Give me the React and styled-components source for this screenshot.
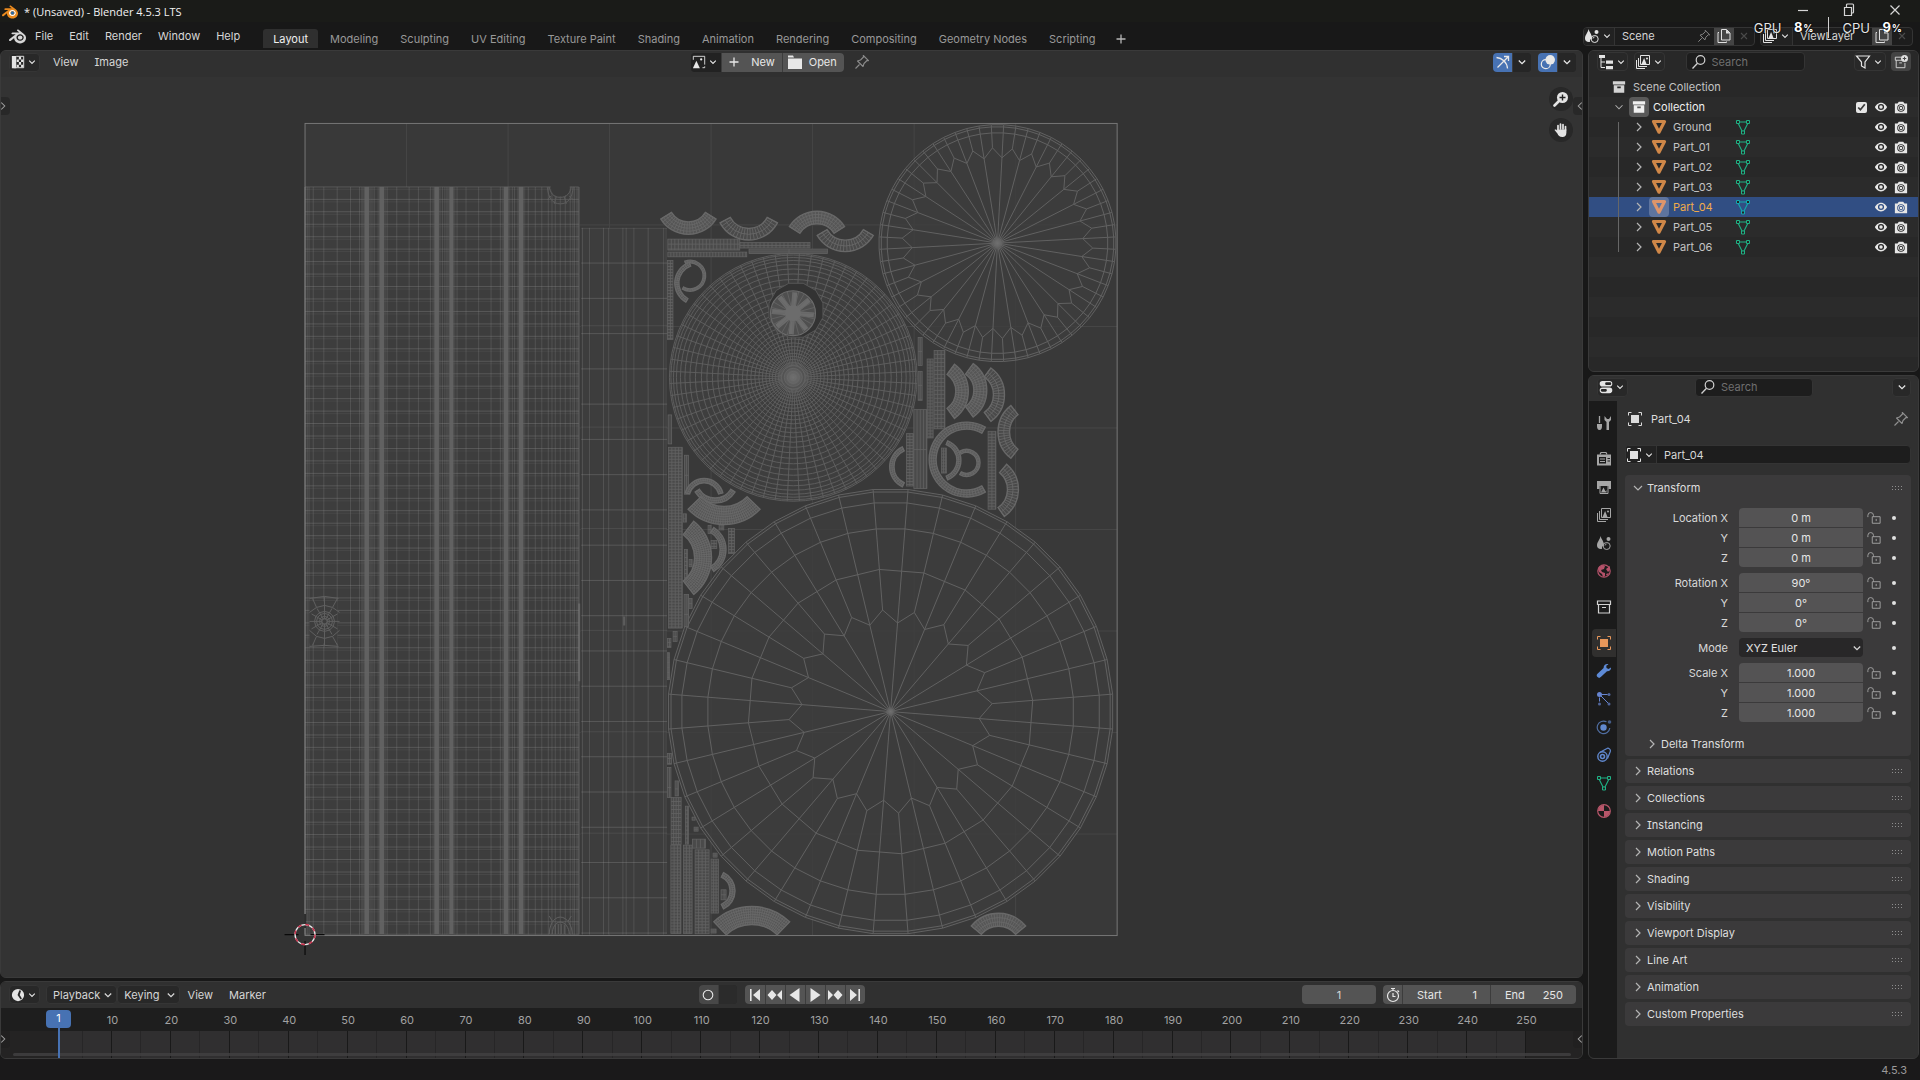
import React from 'react';
import styled, { createGlobalStyle, css } from 'styled-components';
import { SiBlender } from 'react-icons/si';

const GlobalStyle = createGlobalStyle`
  *, *::before, *::after { box-sizing: border-box; }
  body { margin: 0; background: #181818; overflow: hidden; }
  body, button, input, select {
    font-family: Inter, "Noto Sans", sans-serif;
    font-size: 11px;
    line-height: 16px;
    font-feature-settings: "cv08";
    color: #d6d6d6;
  }
  button { border: 0; padding: 0; background: none; cursor: default; }
  input { border: 0; padding: 0; margin: 0; min-width: 0; outline: none; }
  svg { display: block; flex: none; }
`;

/* ---------- icons ---------- */

const S = (d, extra) => <path d={d} fill="none" stroke="currentColor" {...extra} />;
const F = (d, extra) => <path d={d} fill="currentColor" {...extra} />;

const GLYPHS = {
  down: S('M4.800 6.500l3.200 3.200 3.200-3.200', { strokeWidth: 1.3 }),
  right: S('M6 4l4 4-4 4', { strokeWidth: 1.2 }),
  expand: S('M4 6l4 4 4-4', { strokeWidth: 1.2 }),
  left: S('M10 4L6 8l4 4', { strokeWidth: 1.2 }),
  plus: S('M8 3.500v9M3.500 8h9', { strokeWidth: 1.3 }),
  close: S('M5 5l6 6M11 5l-6 6', { strokeWidth: 1.1 }),
  pin: S('M1.500 14.500l4-4M3.500 7l5.500 5.500 1-3 3-3 1.500.2L9.300 1.500l.2 1.500-3 3z', { strokeWidth: 1.1, strokeLinejoin: 'round' }),
  copy: <>{S('M5.500 1.500h5l3.500 3.500v7H5.500zM3 4.500H2v10h8.500v-1')}{F('M10 1.500V5.500h4z')}</>,
  image: <>{S('M14.500 11V1.500h-13v4M12 14.500h2.500V13')}{F('M1 15l4-8.500L9 15z')}<circle cx="10.500" cy="5" r="1.300" fill="currentColor" /></>,
  layers: <>{S('M5.500 1.500h9v9h-9zM3.500 4v8.500H12M1.500 6v8.500H10')}{F('M6.500 10l2.600-6 2.400 6z')}<circle cx="12" cy="4.500" r="1" fill="currentColor" /></>,
  uv: <>{F('M1 1h5v14H1z')}{S('M6 1.500h8.500v13H3', { strokeWidth: 1.1 })}{F('M9 2h2.500v3H9zM6.500 5H9v3H6.500zM11.500 5H14v3h-2.500zM9 8h2.500v3H9zM6.500 11H9v3H6.500zM11.500 11H14v3h-2.500z')}</>,
  folder: F('M1 1.500h5l1 2H1zM1 4.500h14V15H1z'),
  scene: <>{F('M4.500 1C5.500 4.500 8 6.500 8 10.500 5.500 11 6 14 6 14 3 14.500 1 13 1 10.500 1 7 3.800 5 4.500 1z')}<circle cx="10.700" cy="11" r="3.500" fill="none" stroke="currentColor" /><circle cx="12.500" cy="4" r="2" fill="currentColor" />{S('M9 10.500a2 2 0 0 1 1.500-1.500')}</>,
  gizmo: <>{S('M1.500 3.500C7 4 12 8 12.500 14.500M2.500 13.500L13 3M9 2.500h4.500V7', { strokeWidth: 1.3 })}</>,
  overlays: <><circle cx="10.200" cy="5.800" r="4.800" fill="currentColor" /><circle cx="5.800" cy="10.200" r="4.500" fill="none" stroke="currentColor" strokeWidth="1.200" /></>,
  tree: <>{F('M1 1h6v3H1zM8 6.500h7v3.300H8zM8 12h7v3.300H8z')}{S('M3 4v9.500h4M3 8h4')}</>,
  search: <><circle cx="9.500" cy="6" r="4.300" fill="none" stroke="currentColor" strokeWidth="1.200" />{S('M6.500 9.200L1.500 14.500', { strokeWidth: 1.300 })}</>,
  filter: S('M1.500 2h13L10 8v6l-3.500-2V8z', { strokeWidth: 1.2 }),
  newCollection: <>{S('M9 2.500H1.500V6H10M2.500 6v8.500h10V9M6 9h3')}<circle cx="12" cy="4" r="4" fill="currentColor" />{S('M12 2v4M10 4h4', { stroke: '#4b4b4b', strokeWidth: 1.2 })}</>,
  collection: <>{F('M1 1.500h14V5H1z')}<path fillRule="evenodd" fill="currentColor" d="M2 6h12v8.500H2zM6 7.500v2h4v-2z" /></>,
  archive: <>{S('M1.500 2h13v3.500h-13zM2.500 5.500v8.500h11V5.500M6 8.500h4', { strokeWidth: 1.2 })}</>,
  object: <>{F('M4 4h8v8H4z')}{S('M1.500 4.500v-3h3M11.500 1.500h3v3M14.500 11.500v3h-3M4.500 14.500h-3v-3', { strokeWidth: 1 })}</>,
  triangle: <path d="M2.500 2.500h11L8 13.200z" fill="none" stroke="currentColor" strokeWidth="3.200" strokeLinejoin="round" />,
  mesh: <>{S('M2 3h12M3 4l4.500 9M13 4L8.500 13', { strokeWidth: 1.1 })}{S('M1.500 1.500h3v3h-3zM11.500 1.500h3v3h-3zM6.500 12h3v3h-3z', { fill: '#232323' })}</>,
  eye: <><path fillRule="evenodd" fill="currentColor" d="M8 3c3.500 0 6 3 7 5-1 2-3.500 5-7 5s-6-3-7-5c1-2 3.500-5 7-5zm0 1.500A3.500 3.500 0 1 0 8 11.500 3.500 3.500 0 0 0 8 4.500z" /><circle cx="8" cy="8" r="2" fill="currentColor" /></>,
  camera: <><path fillRule="evenodd" fill="currentColor" d="M1 4h3l1.500-2h5L12 4h3v11H1zm7 .8a4.300 4.300 0 1 0 0 8.600 4.300 4.300 0 0 0 0-8.600z" /><circle cx="8" cy="9.100" r="3" fill="none" stroke="currentColor" strokeWidth="1" /><circle cx="8" cy="9.100" r="1.500" fill="currentColor" /></>,
  properties: <>{F('M4 1h8a3.200 3.200 0 0 1 0 6.400H4A3.200 3.200 0 0 1 4 1zM4 8.600h8a3.200 3.200 0 0 1 0 6.400H4a3.200 3.200 0 0 1 0-6.400z')}{S('M8.500 4.200h4M3.500 11.800h4', { stroke: '#262626', strokeWidth: 3, strokeLinecap: 'round' })}</>,
  tool: <>{S('M3.500 1v7', { strokeWidth: 1.3 })}{F('M1 9h5v2c0 2-.5 4-2.500 4S1 13 1 11z')}{F('M8.500 1v4l2 2v8h2.500V7l2-2V1l-2 3h-2z')}</>,
  render: <>{S('M4 3.500l1-2h5l1 2', { strokeWidth: 1.2 })}<path fillRule="evenodd" fill="currentColor" d="M1 3.500h14v11H1zM3 6v6.500h7V6zm8.500 1v1H14V7zm0 2.500v1H14v-1z" />{S('M4 8h5M4 10.500h5')}</>,
  output: <>{F('M1 2h14v5H1z')}{F('M1 7h2.500v3H1zM12.500 7H15v3h-2.500z')}{S('M4 7v7.500h8V7')}{F('M5 13.500L7.500 8.500l2 4L10.500 11v2.500z')}</>,
  world: <><circle cx="8" cy="8" r="6.200" fill="none" stroke="currentColor" strokeWidth="1.200" />{F('M3 4l4-2 2 1-1 3-3 1 1 2 3 1v3l-2 1-1-3-3-2-1-3zM10 6l4-3v4l-2 2zM10 11l3-1-2 3z')}</>,
  wrench: F('M15 4.500l-2.500 1.500-2-1-.2-2.300L12.500 1.200C10 .3 7.500 2 7.600 5L1.500 10.800a2.200 2.200 0 0 0 3.300 3.300L11 8.200c2.500.3 4.300-1.500 4-3.700z'),
  particles: <><circle cx="3.500" cy="3.500" r="2.500" fill="currentColor" /><circle cx="13" cy="3.500" r="1.500" fill="currentColor" opacity=".7" /><circle cx="13" cy="13" r="1.500" fill="currentColor" opacity=".7" />{S('M6 3.500h5.500M5 5l7 7M3.500 6.500v4')}<circle cx="3.500" cy="13" r="1.500" fill="currentColor" opacity=".7" /></>,
  physics: <><circle cx="7.500" cy="8.500" r="3.200" fill="currentColor" />{S('M10.500 2.800A6.300 6.300 0 1 0 13.800 9', { opacity: 0.75, strokeWidth: 1.2 })}<circle cx="13.500" cy="3" r="1.800" fill="currentColor" opacity=".6" /></>,
  constraint: <>{S('M3.500 5.500L10.500 1.700a2.500 2.500 0 0 1 3.700 3L11.500 11.500', { strokeWidth: 1.2 })}<circle cx="6.500" cy="9.500" r="4.700" fill="none" stroke="currentColor" strokeWidth="1.400" /><circle cx="6.500" cy="9.500" r="2" fill="none" stroke="currentColor" strokeWidth="1.600" /></>,
  material: <><circle cx="8" cy="8" r="6.300" fill="none" stroke="currentColor" strokeWidth="1.200" />{F('M8 8V2a6 6 0 0 0-6 6zM8 8v6a6 6 0 0 0 6-6z')}</>,
  lock: <>{S('M6 6.500h9v7.500H6zM1 7V5a3.200 3.200 0 0 1 6.400 0v1.500M10.500 9v2.500', { strokeWidth: 1.1 })}</>,
  clock: <path fillRule="evenodd" fill="currentColor" d="M8 1a7 7 0 1 0 0 14A7 7 0 0 0 8 1zM9.500 2.500l2 .5-1.500 5 2.500 4-1.500 1L7.500 8z" />,
  stopwatch: <><circle cx="8" cy="9" r="5.500" fill="none" stroke="currentColor" strokeWidth="1.200" />{S('M6 1.500h4M8 1.500v2M8 6v3.500h2.500M12.500 3.500l1.500 1.500', { strokeWidth: 1.2 })}</>,
  record: <circle cx="8" cy="8" r="4.800" fill="none" stroke="currentColor" strokeWidth="1.100" />,
  first: F('M3 2h1.600v12H3zM13 2v12L6 8z'),
  prevKey: F('M5 3l4.500 5L5 13 .5 8zM15 3v10l-5-5z'),
  playBack: F('M12.500 1v14L2.500 8z'),
  play: F('M3.500 1v14l10-7z'),
  nextKey: F('M11 3l4.500 5L11 13 6.500 8zM1 3v10l5-5z'),
  last: F('M11.400 2H13v12h-1.600zM3 2v12l7-6z'),
  zoom: <><circle cx="9.500" cy="6.500" r="5.500" fill="currentColor" />{S('M6 10L1.500 14.500', { strokeWidth: 2.6, strokeLinecap: 'round' })}{S('M9.500 3.500v6M6.500 6.500h6', { stroke: '#222', strokeWidth: 1.400 })}</>,
  hand: <>{S('M5 8V3.500M7.500 7V2M10 7V2.500M12.500 8V4.500', { strokeWidth: 1.7, strokeLinecap: 'round' })}{F('M4.200 7.500h9.200v3c0 3-1.500 4.500-4 4.500-3 0-4-1.500-5-3.500L1.500 8c1-1 2-.3 2.700.8z')}</>,
  minimize: S('M3 8.500h10', { strokeWidth: 1.2 }),
  restore: S('M3.500 5.500h7v8h-7zM5.500 5V3a1 1 0 0 1 1-1h5a1 1 0 0 1 1 1v7a1 1 0 0 1-1 1h-1', { strokeWidth: 1.2 }),
  quit: S('M3.500 3.500l9 9M12.500 3.500l-9 9', { strokeWidth: 1.2 }),
};

const Icon = ({ name, size = 16 }) => (
  <svg width={size} height={size} viewBox="0 0 16 16" aria-hidden="true">{GLYPHS[name]}</svg>
);

/* ---------- shell ---------- */

const Shell = styled.div`
  height: 100vh; display: flex; flex-direction: column; position: relative;
  background: #181818;
`;
const TitleBar = styled.header`
  height: 22px; flex: none; display: flex; align-items: center;
  padding: 2px 17px 0 2px; background: #1a1b18;
`;
const Title = styled.span`
  flex: 1; padding-left: 6px; color: #f2f2f2;
  font-family: "Open Sans", "Noto Sans", sans-serif;
`;
const WindowButtons = styled.div`
  display: flex; gap: 30px; color: #eee; padding-bottom: 4px;
`;
const MenuBar = styled.nav`
  height: 28px; flex: none; display: flex; align-items: center;
  padding: 0 7px; color: #d6d6d6;
`;
const LogoButton = styled.button`padding: 0 1px 0 2px;`;
const MenuButton = styled.button`
  height: 18px; padding: 0 8px; white-space: nowrap;
`;
const Workspaces = styled.div`
  display: flex; gap: 2px; align-self: flex-end; margin: 0 0 2px 15px; flex: 1;
`;
const WorkspaceTab = styled.button`
  height: 19px; padding: 0 10px; border-radius: 3px 3px 0 0; white-space: nowrap;
  color: ${(p) => (p.$active ? '#f0f0f0' : '#989898')};
  background: ${(p) => (p.$active ? '#2f2f2f' : 'transparent')};
`;
const AddTab = styled.button`color: #b5b5b5; padding: 0 5px;`;

const field = css`
  height: 19px; display: flex; align-items: center; border-radius: 4px;
  background: #1d1d1d; border: 1px solid #343434; overflow: hidden;
`;
const DataBlock = styled.div`
  ${field}
  margin-left: ${(p) => p.$gap || 0}px; color: #d8d8d8;
`;
const Picker = styled.button`
  height: 100%; display: flex; align-items: center; justify-content: center;
  width: ${(p) => p.$w || 31}px; color: #e2e2e2; background: #222;
  border-right: 1px solid #343434;
`;
const NameInput = styled.input`
  width: 79px; height: 100%; padding-left: 7px; background: transparent;
  flex: ${(p) => (p.$grow ? 1 : 'none')};
`;
const SlotButton = styled.button`
  width: 20px; height: ${(p) => (p.$solo ? '19px' : '100%')}; display: flex; align-items: center; justify-content: center;
  border-radius: ${(p) => (p.$solo ? 4 : 0)}px;
  background: ${(p) => (p.$raised ? '#444' : 'transparent')};
  color: ${(p) => (p.$dim ? '#4a4a4a' : p.$soft ? '#8a8a8a' : '#e0e0e0')};
`;

const UsageOverlay = styled.aside`
  position: absolute; top: 17px; right: 18px; display: flex; align-items: center;
  color: #e6e6e6; font-size: 13px; text-shadow: 0 0 2px #000, 0 0 1px #000;
  pointer-events: none;
`;
const UsageValue = styled.b`
  width: 26px; text-align: right; color: #fff; margin-left: 6px; white-space: nowrap;
  small { font-size: 10px; margin-left: 1px; }
`;
const UsageLine = styled.span`width: 1px; height: 21px; margin: 0 14px; background: #d0d0d0;`;

const Workspace = styled.main`
  flex: 1; min-height: 0; display: grid; grid-template-columns: minmax(0, 1fr) 331px;
  gap: 5px; padding-right: 1px;
`;
const Column = styled.div`display: flex; flex-direction: column; gap: 3px; min-height: 0;`;
const Area = styled.section`
  display: flex; flex-direction: column; position: relative; overflow: hidden;
  border: 1px solid #3a3a3a; border-radius: 6px; background: ${(p) => p.$bg};
  flex: ${(p) => (p.$grow ? '1 1 0' : 'none')}; min-height: 0;
`;
const AreaHeader = styled.div`
  height: 26px; flex: none; padding: 0 6px ${(p) => p.$base}px 8px; background: ${(p) => p.$bg || '#303030'};
  display: grid; grid-template-columns: 1fr auto 1fr; align-items: center;
`;
const Group = styled.div`
  display: flex; align-items: center; gap: ${(p) => p.$gap || 0}px;
  justify-content: ${(p) => (p.$end ? 'flex-end' : 'flex-start')};
  margin-right: ${(p) => p.$shift || 0}px;
`;
const Chip = styled.button`
  height: 19px; display: flex; align-items: center; justify-content: center;
  width: ${(p) => p.$w || 31}px; color: #e4e4e4; background: #282828;
  border: 1px solid #353535; border-radius: 4px;
`;
const Joined = styled.div`
  display: flex; border-radius: 4px; overflow: hidden; background: #282828;
`;
const Push = styled.button`
  height: 19px; min-width: ${(p) => p.$min || 19}px; display: flex; align-items: center; justify-content: center;
  padding: 0 ${(p) => p.$end || 0}px 0 ${(p) => p.$start || 0}px; gap: ${(p) => p.$gap || 0}px; color: #e8e8e8;
  background: ${(p) => p.$bg || '#545454'};
  & + & { border-left: 1px solid #3c3c3c; }
`;

/* ---------- image editor ---------- */

const Canvas = styled.div`
  flex: 1; min-height: 0; background: #333333; position: relative;
  > svg { width: 100%; height: 100%; }
`;
const CanvasTools = styled.div`
  position: absolute; right: 9px; top: 10px; display: flex; flex-direction: column; gap: 7px;
`;
const RoundTool = styled.button`
  width: 24px; height: 24px; border-radius: 12px; background: #282828; color: #e4e4e4;
  display: flex; align-items: center; justify-content: center;
`;
const EdgeHandle = styled.button`
  position: absolute; top: ${(p) => p.$top}px; ${(p) => p.$side}: -5px;
  width: 14px; height: 18px; color: #a0a0a0; display: flex; align-items: center; justify-content: center;
  background: rgba(30, 30, 30, 0.5); border-radius: 4px;
`;

const rad = (d) => (d * Math.PI) / 180;
const pt = (cx, cy, r, a) => `${(cx + r * Math.cos(rad(a))).toFixed(1)} ${(cy + r * Math.sin(rad(a))).toFixed(1)}`;
const range = (n) => Array.from({ length: n }, (_, i) => i);
const ring = (cx, cy, r, n, off) => `M${range(n).map((i) => pt(cx, cy, r, off + (i * 360) / n)).join('L')}Z`;
const spokes = (cx, cy, r1, r2, n, off) =>
  range(n).map((i) => `M${pt(cx, cy, r1, off + (i * 360) / n)}L${pt(cx, cy, r2, off + (i * 360) / n)}`).join('');
const zigzag = (cx, cy, r1, r2, n, off) =>
  `M${range(n * 2).map((i) => pt(cx, cy, i % 2 ? r2 : r1, off + (i * 180) / n)).join('L')}Z`;

function Island({ cx, cy, r1, r2, from, to, n = 16, rings = 1 }) {
  const large = to - from > 180 ? 1 : 0;
  const outline = `M${pt(cx, cy, r2, from)}A${r2} ${r2} 0 ${large} 1 ${pt(cx, cy, r2, to)}L${pt(cx, cy, r1, to)}A${r1} ${r1} 0 ${large} 0 ${pt(cx, cy, r1, from)}Z`;
  const ribs = range(n).map((i) => {
    const a = from + ((to - from) * i) / (n - 1);
    return `M${pt(cx, cy, r1, a)}L${pt(cx, cy, r2, a)}`;
  }).join('');
  const lanes = range(rings).map((i) => {
    const r = r1 + ((r2 - r1) * (i + 1)) / (rings + 1);
    return `M${pt(cx, cy, r, from)}A${r} ${r} 0 ${large} 1 ${pt(cx, cy, r, to)}`;
  }).join('');
  return (
    <>
      <path d={outline} fill={rings > 1 || r2 - r1 < 6 ? '#565656' : '#4a4a4a'} stroke="#686868" strokeWidth="1.400" />
      <path d={ribs + lanes} fill="none" stroke="#6a6a6a" strokeWidth=".8" />
    </>
  );
}

function Strip({ x, y, w, h, stepX = 4, stepY = 4 }) {
  let d = '';
  for (let i = stepX; i < w; i += stepX) d += `M${x + i} ${y}v${h}`;
  for (let i = stepY; i < h; i += stepY) d += `M${x} ${y + i}h${w}`;
  return (
    <>
      <rect x={x} y={y} width={w} height={h} fill="#4a4a4a" stroke="#626262" strokeWidth=".8" />
      <path d={d} stroke="#636363" strokeWidth=".8" />
    </>
  );
}

const ISLANDS = [
  [688.3, 202, 20, 32.5, 32, 148, 20, 3], [748.7, 207.700, 21, 32.5, 28, 152, 20],
  [817, 244, 20, 32.5, 212, 328, 20, 3], [845.3, 219.3, 21, 32.5, 30, 150, 20],
  [690, 276, 13, 15.5, -110, 120, 24], [696.7, 283.3, 18, 22, 120, 250, 22],
  [935, 391.7, 21, 33.5, -54, 54, 20, 3], [954, 390.7, 20, 33, -54, 54, 20, 3],
  [971.7, 395, 22, 33, -54, 54, 20], [1031.700, 432.3, 22, 33.5, 128, 232, 20],
  [985.7, 490, 22, 33, -50, 55, 20], [966.7, 460, 30.5, 37.5, 60, 300, 50, 2],
  [940, 460.7, 17, 21, -68, 68, 22], [966.7, 463.3, 10.5, 13.500, -120, 120, 20],
  [911.7, 467.3, 17.5, 22, 115, 245, 22], [704, 498.3, 15, 19.5, 195, 345, 22],
  [715, 480, 18.5, 23.5, 32, 148, 22], [724, 475, 32, 50, 44, 136, 34, 6],
  [665, 558.3, 29.500, 46.5, -52, 52, 34, 6], [700, 550, 20, 26, -58, 58, 22, 2],
  [715, 891.7, 15, 20, -65, 65, 20], [751.7, 962, 36.5, 54.5, 226, 314, 34, 6],
  [998.7, 949.7, 22.5, 35.500, 220, 320, 22, 2],
];
const STRIPS = [
  [667.7, 239.3, 72, 11, 3.5, 5], [667.7, 252.3, 79, 4.7, 3, 5], [740, 242.7, 70, 5.5, 4, 3],
  [749, 249.3, 78.5, 4.2, 40, 2], [667.3, 260.7, 5.500, 79, 3, 3],
  [918.3, 337.7, 4, 28, 2, 14], [918.3, 371.7, 4, 29, 2, 14], [927.3, 359.3, 6, 79, 3, 3],
  [934.3, 350.7, 10.700, 78.5, 3.500, 4], [914, 410, 13, 79, 3.2, 40], [906.7, 434, 6.7, 52.5, 3.3, 3],
  [988.3, 431.700, 7.7, 78, 3.800, 3], [941.7, 448.5, 5, 25, 2, 3],
  [668, 415.3, 3.5, 29, 50, 50], [668.3, 447.7, 13.7, 181, 3.400, 3], [684.3, 455.7, 4, 39, 2, 20],
  [711, 541, 5.7, 8, 3, 3], [719, 525.7, 4.7, 4.7, 3, 3], [683.3, 514.3, 3, 8.300, 2, 5],
  [728.500, 529, 6, 25, 3, 3], [689, 560, 3, 7.300, 2, 5], [684.3, 550, 3, 30, 2, 4],
  [684, 595, 4.5, 32, 2, 20], [689, 599, 3, 10, 2, 5], [708, 526, 3, 8, 2, 4],
  [667.3, 639, 3.5, 9, 2, 4], [667.3, 653.3, 2, 27, 1, 5], [673, 632, 4, 10, 2, 5], [667.300, 754.3, 4, 10.700, 2, 5],
  [667.3, 768.3, 3.5, 30, 2, 20], [675, 781.700, 3.3, 15, 2, 8], [671, 798.3, 10, 47, 2.5, 4],
  [685.3, 807, 3, 38, 2, 4], [670.7, 846, 10, 88.5, 3.300, 3], [683.3, 846, 8.700, 88.5, 3, 3],
  [695, 850.7, 14, 84, 3.500, 3], [711, 860, 7.3, 54, 2.500, 3], [692.3, 840, 13, 9, 4, 9], [721, 890.7, 5, 10, 3, 5],
  [692, 818, 3, 3, 3, 3], [694, 828, 4, 4, 2, 2], [713, 854, 4, 4, 2, 2], [711, 930, 5, 4, 2, 2],
];
const WALL_X = [306.7, 308.5, 312.7, 323.3, 336.7, 350, 359, 361.5, 371.5, 373.7, 386.7, 396.3, 408.7, 418, 430, 442, 444.5, 446.5, 456.7, 465.7, 478.3, 490.7, 500, 512, 514.3, 528, 535, 541.5, 548, 551.7, 555, 560, 565, 570, 572.7, 574.3, 576.7];
const WALL_BANDS = [[364, 4.5], [379, 4.5], [434, 4.500], [449, 4], [503.500, 4.5], [518.5, 4.500]];
const SHAFT_X = [582.3, 589.3, 603.3, 608.5, 622.7, 626, 633.7, 648, 663.5];

function WheelDetail() {
  const cx = 793;
  const cy = 313.5;
  return (
    <>
      <path d={ring(796, 310.5, 28, 12, 15)} fill="#333333" stroke="#565656" />
      <circle cx={cx} cy={cy} r="22.500" fill="#4f4f4f" stroke="#6c6c6c" strokeWidth="1.200" />
      <path d={spokes(cx, cy, 0, 21, 8, 5)} stroke="#6c6c6c" strokeWidth="5" />
      <path d={spokes(cx, cy, 8, 22, 24, 0)} stroke="#666" strokeWidth=".8" />
      <circle cx={cx} cy={cy} r="8" fill="#6c6c6c" />
    </>
  );
}

function UvLayout() {
  const left = 304.5;
  const top = 123.5;
  const size = 813;
  const cell = size / 8;
  const disc = { cx: 793.3, cy: 377.7 };
  const discRings = [124, 122.5, 120, 117, 113, 108.5, 103.5, 98, 92, 86.5, 81, 75.5, 70, 65, 60, 55.5, 51, 46.5, 42.5, 38.5, 34.5, 31, 27.500, 24, 21, 18, 15, 12, 9, 6, 3];
  return (
    <svg viewBox="1 77 1581 901" preserveAspectRatio="xMidYMid meet" role="img" aria-label="UV layout">
      <defs>
        <radialGradient id="core">
          <stop offset="0" stopColor="#707070" />
          <stop offset=".4" stopColor="#6a6a6a" stopOpacity=".8" />
          <stop offset="1" stopColor="#666" stopOpacity="0" />
        </radialGradient>
      </defs>
      <rect x={left} y={top} width={size} height={size} fill="#393939" />
      <path
        d={range(7).map((i) => `M${left + cell * (i + 1)} ${top}v${size}M${left} ${top + cell * (i + 1)}h${size}`).join('')}
        stroke="#464646"
      />
      <rect x="304.5" y="187" width="275" height="748.5" fill="#3d3d3d" />
      <rect x="580.5" y="228" width="86" height="707.5" fill="#3d3d3d" />
      <circle cx="997.7" cy="243.3" r="118" fill="#3d3d3d" fillOpacity=".8" />
      <circle cx="890.7" cy="712.3" r="222" fill="#3d3d3d" fillOpacity=".8" />
      <circle cx={disc.cx} cy={disc.cy} r="124" fill="#3e3e3e" />
      <rect x={left} y={top} width={size} height={size} fill="none" stroke="#777" />

      <g stroke="#8c8c8c" fill="none">
        <path opacity=".35" d={range(61).map((i) => `M304.5 ${(187 + i * 12.47).toFixed(1)}h274`).join('')} />
        <path opacity=".14" d={range(60).map((i) => `M304.5 ${(189.5 + i * 12.47).toFixed(1)}h274`).join('')} />
        <path opacity=".28" d={WALL_X.map((x) => `M${x} 187V935.500`).join('')} />
        <path opacity=".3" d="M304.500 187V935.500M578.5 187V935.500" strokeWidth="2" />
        <path opacity=".28" d={SHAFT_X.map((x) => `M${x} 228V935.500`).join('')} />
        <path opacity=".35" d={range(20).map((i) => `M581 ${(263.3 + i * 35.3).toFixed(1)}h86`).join('')} />
        <path opacity=".2" d="M581 228.500h86M581 326h86M581 427.500h86M581 529h86M581 631h86M581 732.500h86M581 834h86M666 228V935" />
        <path opacity=".4" d="M579 604v78M624 617v9" strokeWidth="2" />
      </g>
      <g fill="#656565">
        {WALL_BANDS.map(([x, w]) => <rect key={x} x={x} y="187" width={w} height="748" opacity=".9" />)}
        {WALL_BANDS.map(([x, w]) => <rect key={x} x={x - 2} y="187" width={w + 4} height="748" opacity=".3" />)}
      </g>
      <path d="M550.5 186h19c0 6-3 10.500-9.500 10.500s-9.500-4.500-9.500-10.500z" fill="#393939" />
      <path d="M549 187c1 6 4 10.500 11 10.500s10-4.500 11-10.500M547 187c1 11 5 17 13 17s12-6 13-17M551 196l-4 4M556 197l-2 7M564 197l2 7M569 196l4 4" fill="none" stroke="#5c5c5c" />
      <g fill="none" stroke="#606060">
        <rect x="309" y="602" width="28" height="42" fill="#3d3d3d" stroke="none" />
        <path d={[3, 5, 8, 10].map((r) => ring(324, 622, r, 12, 0)).join('') + spokes(324, 622, 2, 15, 12, 0)} />
        <path d="M309 613l7-5 8-2 8 2 7 5M309 631l7 6 8 2 8-2 7-6M316 608l-4-9M332 608l5-9M316 637l-4 9M332 637l5 9M324 597v12M324 635v12M309 599l15-2 14 2M309 647l15-1 14 1" />
        <path d="M549 935c0-8 4-17 11-17s12 9 12 17M552 935c0-6 3-12 8-12s9 6 9 12M555 935v-9M558 935v-10M561 935v-10M564 935v-9M552 922l-3-5M568 922l3-5" />
      </g>

      <g fill="none" stroke="#616161">
        {[118.7, 116.5, 110.5].map((r) => <path key={r} d={ring(997.7, 243.3, r, 60, -3)} />)}
        <path d={zigzag(997.7, 243.3, 85.5, 95.5, 30, -3)} />
        <path d={spokes(997.7, 243.3, 0, 85.5, 30, -3) + spokes(997.7, 243.3, 85.5, 118.5, 30, -3) + spokes(997.7, 243.3, 95.5, 118.5, 30, 3)} />
      </g>
      <circle cx="997.7" cy="243.3" r="7" fill="url(#core)" />

      <g fill="none" stroke="#616161">
        {[223, 220.5, 209.500, 183.5].map((r) => <path key={r} d={ring(890.7, 712.3, r, 40, 4.5)} />)}
        <path d={ring(890.7, 712.3, 142.7, 20, -4.5)} />
        <path d={zigzag(890.7, 712.3, 89, 102, 20, 4.5)} />
        <path d={spokes(890.7, 712.3, 0, 223, 20, 4.5) + spokes(890.7, 712.3, 102, 223, 20, 13.5)} />
      </g>
      <circle cx="890.7" cy="712.3" r="5" fill="url(#core)" />

      <g fill="none" stroke="#606060" strokeWidth=".9">
        {discRings.map((r) => <circle key={r} cx={disc.cx} cy={disc.cy} r={r} />)}
        <path d={spokes(disc.cx, disc.cy, 11, 124, 64, 2.8)} />
      </g>
      <circle cx={disc.cx} cy={disc.cy} r="16" fill="url(#core)" />
      <WheelDetail />

      {STRIPS.map(([x, y, w, h, sx, sy]) => <Strip key={`${x}-${y}`} x={x} y={y} w={w} h={h} stepX={sx} stepY={sy} />)}
      {ISLANDS.map(([cx, cy, r1, r2, from, to, n, rings]) => (
        <Island key={`${cx}-${cy}-${r1}`} cx={cx} cy={cy} r1={r1} r2={r2} from={from} to={to} n={n} rings={rings} />
      ))}

      <g fill="none">
        <path d="M284 935.500h14M310 935.500h14M304.500 915v14M304.500 942v14" stroke="#0a0a0a" strokeWidth="1.2" />
        <circle cx="304.5" cy="935.500" r="10" stroke="#e8e8e8" strokeWidth="1.300" />
        <circle cx="304.5" cy="935.500" r="10" stroke="#c8304c" strokeWidth="1.500" strokeDasharray="3.930 3.930" />
      </g>
    </svg>
  );
}

/* ---------- timeline ---------- */

const NumberLabel = styled.label`
  height: 19px; display: flex; align-items: center; justify-content: space-between;
  width: ${(p) => p.$w}px; padding: 0 13px 0 14px; background: #545454; color: #e6e6e6;
  border-left: 1px solid #3c3c3c;
  input { width: 24px; background: transparent; text-align: right; color: inherit; }
`;
const FrameInput = styled.input`
  width: 74px; height: 19px; border-radius: 4px; background: #545454; text-align: center;
`;
const MenuSelect = styled.button`
  height: 19px; padding-left: 6px; display: flex; align-items: center; gap: ${(p) => p.$gap || 0}px;
  background: #282828; border: 1px solid #353535; border-radius: 4px;
`;
const Ruler = styled.div`
  height: 23px; flex: none; display: grid; grid-template-columns: repeat(25, 1fr);
  padding: 1px 26px 0 82px; background: #1e1e1e; align-items: center;
  text-align: center; color: #a2a2a2;
`;
const Track = styled.div`
  flex: 1; min-height: 27px; padding: 0 56px 0 58px; background: #242323; display: grid;
  grid-template-columns: 4fr repeat(49, 5fr);
  &::after {
    content: ''; position: absolute; left: 12px; right: 11px; bottom: 2px; height: 3px;
    border-radius: 2px; background: #424142; opacity: 0.8;
  }
`;
const Tick = styled.span`
  background: #302f30; border-right: 1px solid ${(p) => (p.$major ? '#191919' : '#272627')};
`;
const Playhead = styled.div`
  position: absolute; left: 45px; top: 28px; bottom: 0; width: 25px;
  display: flex; flex-direction: column; align-items: center;
  &::after { content: ''; flex: 1; width: 2px; background: #4772b3; }
  span { width: 100%; height: 18px; line-height: 17px; border-radius: 4px; background: #4772b3; color: #fff; text-align: center; }
`;

/* ---------- outliner ---------- */

const OutlinerArea = styled(Area)`height: 322px;`;
const SideHeader = styled.div`
  height: ${(p) => p.$h}px; flex: none; display: grid; grid-template-columns: 1fr auto 1fr; align-items: center;
  padding: 0 7px ${(p) => p.$base}px 8px; background: ${(p) => p.$bg};
`;
const SearchBox = styled.label`
  ${field}
  width: ${(p) => p.$w}px; margin-right: ${(p) => p.$shift || 0}px; padding-left: 4px; color: #d0d0d0;
  input { flex: 1; background: transparent; padding-left: 5px; }
  input::placeholder { color: #6f6f6f; }
`;
const Tree = styled.ul`
  flex: 1; margin: 0; padding: 0; list-style: none; position: relative;
  background: repeating-linear-gradient(#282828 0 20px, #2b2b2b 20px 40px);
  &::before { content: ''; position: absolute; left: 29px; top: 45px; height: 130px; width: 1px; background: #676767; z-index: 1; }
`;
const TreeRow = styled.li`
  height: 20px; display: flex; align-items: center; padding: 0 7px 0 ${(p) => 20 + p.$depth * 20}px;
  background: ${(p) => (p.$selected ? '#314e83' : 'transparent')};
`;
const Slot = styled.span`
  width: 20px; height: 20px; display: flex; align-items: center; justify-content: center;
  border-radius: 4px; color: ${(p) => p.$color || '#d4d4d4'};
  background: ${(p) => (p.$lit ? 'rgba(255,255,255,.22)' : 'transparent')};
`;
const RowName = styled.span`
  flex: ${(p) => (p.$wide ? 'none' : '0 0 60px')}; margin-left: 4px; white-space: nowrap;
  color: ${(p) => p.$color || '#c4c4c4'};
`;
const Filler = styled.span`flex: 1;`;
const Check = styled.input`width: 11px; height: 11px; accent-color: #e6e6e6;`;

/* ---------- properties ---------- */

const PropsBody = styled.div`flex: 1; min-height: 0; display: flex;`;
const NavTabs = styled.div`
  width: 28px; flex: none; background: #1b1b1b; padding: 8px 1px 0 3px; display: flex; flex-direction: column;
`;
const NavTab = styled.button`
  height: 28px; display: flex; align-items: center; justify-content: center;
  margin-top: ${(p) => (p.$gap ? 8 : 0)}px; color: ${(p) => p.$color || '#a6a6a6'};
  background: ${(p) => (p.$active ? '#302f2e' : 'transparent')}; border-radius: 4px 0 0 4px;
`;
const PropsContent = styled.div`
  flex: 1; min-width: 0; padding: 0 7px 0 8px; display: flex; flex-direction: column; background: #303030;
`;
const Crumb = styled.div`
  height: 36px; display: flex; align-items: center; padding-left: 2px; gap: 8px; color: #dcdcdc;
`;
const IdField = styled.div`${field} margin: 8px 0 11px;`;
const Panel = styled.section`
  background: #3b3a3b; border-radius: 4px; margin-bottom: 3px; flex: none;
`;
const PanelHeader = styled.button`
  width: 100%; height: ${(p) => p.$h || 24}px; display: flex; align-items: center;
  padding: 0 8px 0 ${(p) => p.$indent || 5}px; color: #dedede; text-align: left; gap: 1px;
  svg:first-child { color: #b4b4b4; }
`;
const PanelTitle = styled.span`flex: 1;`;
const Fields = styled.div`padding: 7px 4px 9px 0; display: flex; flex-direction: column; gap: 6px;`;
const Triple = styled.div`
  display: flex; flex-direction: column; gap: 1px;
  > div:first-child input { border-radius: 4px 4px 0 0; }
  > div:last-child input { border-radius: 0 0 4px 4px; }
`;
const FieldRow = styled.div`
  display: grid; grid-template-columns: 103px minmax(0, 1fr) 14px 26px; align-items: center; height: 19px;
  label { text-align: right; color: #d8d8d8; }
`;
const ValueInput = styled.input`
  height: 19px; margin: 0 4px 0 11px; background: #545354; text-align: center; color: #e6e6e6;
`;
const SelectWrap = styled.div`
  height: 19px; margin: 0 4px 0 11px; display: grid; align-items: center; background: #282728;
  border-radius: 4px;
  > * { grid-area: 1 / 1; }
  svg { justify-self: end; margin-right: -2px; pointer-events: none; }
  select { appearance: none; border: 0; background: transparent; padding: 0 7px; width: 100%; color: #e2e2e2; outline: none; }
`;
const Lock = styled.button`color: #a0a0a0;`;
const Dot = styled.span`width: 4px; height: 4px; border-radius: 2px; background: #e0e0e0; justify-self: center;`;

const StatusBar = styled.footer`
  height: 21px; flex: none; display: flex; align-items: center; justify-content: flex-end;
  padding: 0 13px; color: #9a9a9a; background: #1a191a;
`;

const MENUS = ['File', 'Edit', 'Render', 'Window', 'Help'];
const WORKSPACES = ['Layout', 'Modeling', 'Sculpting', 'UV Editing', 'Texture Paint', 'Shading', 'Animation', 'Rendering', 'Compositing', 'Geometry Nodes', 'Scripting'];
const OBJECTS = ['Ground', 'Part_01', 'Part_02', 'Part_03', 'Part_04', 'Part_05', 'Part_06'];
const PANELS = ['Relations', 'Collections', 'Instancing', 'Motion Paths', 'Shading', 'Visibility', 'Viewport Display', 'Line Art', 'Animation', 'Custom Properties'];
const NAV = [
  ['tool'], ['render', '', true], ['output'], ['layers'], ['scene'], ['world', '#b5526a'],
  ['archive', '#d2d2d2', true], ['object', '#e8975a', true], ['wrench', '#5d8ad6'], ['particles', '#6684cf'],
  ['physics', '#6189cf'], ['constraint', '#6189cf'], ['mesh', '#1fb285'], ['material', '#b8566a'],
];
const TRANSPORT = ['first', 'prevKey', 'playBack', 'play', 'nextKey', 'last'];

function Grip() {
  return (
    <svg width="11" height="5" viewBox="0 0 11 5" aria-hidden="true">
      {range(4).map((i) => (
        <g key={i} fill="#8e8e8e"><rect x={i * 3} y="0" width="1" height="1" /><rect x={i * 3} y="3" width="1" height="1" /></g>
      ))}
    </svg>
  );
}

function AppMark() {
  return (
    <svg width="16" height="16" viewBox="0 0 24 24" aria-hidden="true">
      <circle cx="15.500" cy="13.500" r="5.500" fill="#fff" />
      <SiBlender size={24} color="#ea8a1e" />
      <circle cx="15.700" cy="13.400" r="2.600" fill="#2b6ba8" />
    </svg>
  );
}

function VectorFields({ label, values }) {
  return (
    <Triple>
      {['X', 'Y', 'Z'].map((axis, i) => {
        const id = `${label}-${axis}`;
        return (
          <FieldRow key={axis}>
            <label htmlFor={id}>{i === 0 ? `${label} ${axis}` : axis}</label>
            <ValueInput id={id} defaultValue={values[i]} />
            <Lock aria-label={`Lock ${label} ${axis}`}><Icon name="lock" size={14} /></Lock>
            <Dot />
          </FieldRow>
        );
      })}
    </Triple>
  );
}

function ImageEditor() {
  return (
    <Area $grow $bg="#333333">
      <AreaHeader $base={4}>
        <Group $gap={5}>
          <Chip aria-label="Editor type"><Icon name="uv" size={14} /><Icon name="down" size={14} /></Chip>
          <Group>
            <MenuButton>View</MenuButton>
            <MenuButton>Image</MenuButton>
          </Group>
        </Group>
        <Group $gap={8} $shift={22}>
          <Joined>
            <Push $bg="#222" $start={1} $end={1} aria-label="Browse image"><Icon name="image" size={14} /><Icon name="down" size={14} /></Push>
            <Push $start={4} $end={7} $gap={9}><Icon name="plus" />New</Push>
            <Push $start={4} $end={7} $gap={6}><Icon name="folder" />Open</Push>
          </Joined>
          <SlotButton $soft aria-label="Pin image"><Icon name="pin" /></SlotButton>
        </Group>
        <Group $end $gap={7}>
          <Joined>
            <Push $bg="#4772b3" aria-label="Gizmos"><Icon name="gizmo" /></Push>
            <Push $bg="#262626" aria-label="Gizmo options"><Icon name="down" /></Push>
          </Joined>
          <Joined>
            <Push $bg="#4772b3" aria-label="Overlays"><Icon name="overlays" /></Push>
            <Push $bg="#262626" aria-label="Overlay options"><Icon name="down" /></Push>
          </Joined>
        </Group>
      </AreaHeader>
      <Canvas>
        <UvLayout />
        <CanvasTools>
          <RoundTool aria-label="Zoom"><Icon name="zoom" /></RoundTool>
          <RoundTool aria-label="Pan"><Icon name="hand" /></RoundTool>
        </CanvasTools>
        <EdgeHandle $side="left" $top={20} aria-label="Show toolbar"><Icon name="right" size={14} /></EdgeHandle>
        <EdgeHandle $side="right" $top={20} aria-label="Show sidebar"><Icon name="left" size={14} /></EdgeHandle>
      </Canvas>
    </Area>
  );
}

function Timeline() {
  return (
    <Area $bg="#242323">
      <AreaHeader $base={1}>
        <Group $gap={6}>
          <Chip aria-label="Editor type"><Icon name="clock" size={14} /><Icon name="down" size={14} /></Chip>
          <Group>
            <MenuSelect>Playback<Icon name="down" /></MenuSelect>
            <MenuSelect $gap={3}>Keying<Icon name="down" /></MenuSelect>
            <MenuButton>View</MenuButton>
            <MenuButton>Marker</MenuButton>
          </Group>
        </Group>
        <Group $gap={8} $shift={22}>
          <Joined>
            <Push $bg="#484848" aria-label="Auto keying"><Icon name="record" /></Push>
            <Push $bg="#2b2b2b" aria-label="Auto keying options" />
          </Joined>
          <Joined>
            {TRANSPORT.map((t) => <Push key={t} $min={20} aria-label={t}><Icon name={t} /></Push>)}
          </Joined>
        </Group>
        <Group $end $gap={7}>
          <FrameInput aria-label="Current frame" defaultValue="1" />
          <Joined>
            <Push aria-label="Use preview range"><Icon name="stopwatch" /></Push>
            <NumberLabel $w={88}>Start<input defaultValue="1" /></NumberLabel>
            <NumberLabel $w={86}>End<input defaultValue="250" /></NumberLabel>
          </Joined>
        </Group>
      </AreaHeader>
      <Ruler>{range(25).map((i) => <span key={i}>{(i + 1) * 10}</span>)}</Ruler>
      <Track>{range(50).map((i) => <Tick key={i} $major={i % 2 === 1} />)}</Track>
      <Playhead><span>1</span></Playhead>
      <EdgeHandle $side="left" $top={48} aria-label="Show channels"><Icon name="right" size={14} /></EdgeHandle>
      <EdgeHandle $side="right" $top={48} aria-label="Show timeline sidebar"><Icon name="left" size={14} /></EdgeHandle>
    </Area>
  );
}

function Outliner() {
  return (
    <OutlinerArea $bg="#282828">
      <SideHeader $bg="#282828" $h={26} $base={5}>
        <Group $gap={6}>
          <Chip aria-label="Editor type"><Icon name="tree" /><Icon name="down" size={14} /></Chip>
          <Chip aria-label="Display mode"><Icon name="layers" /><Icon name="down" size={14} /></Chip>
        </Group>
        <SearchBox $w={119} $shift={18}><Icon name="search" /><input placeholder="Search" aria-label="Search outliner" /></SearchBox>
        <Group $end $gap={5}>
          <Chip $w={32} aria-label="Filter"><Icon name="filter" /><Icon name="down" size={14} /></Chip>
          <SlotButton $raised $solo aria-label="New collection"><Icon name="newCollection" size={14} /></SlotButton>
        </Group>
      </SideHeader>
      <Tree>
        <TreeRow $depth={0}><Slot><Icon name="collection" size={14} /></Slot><RowName $wide>Scene Collection</RowName></TreeRow>
        <TreeRow $depth={0}>
          <Slot $color="#b0b0b0"><Icon name="expand" size={14} /></Slot>
          <Slot $lit $color="#f0f0f0"><Icon name="collection" size={14} /></Slot>
          <RowName $wide $color="#f0f0f0">Collection</RowName>
          <Filler />
          <Slot><Check type="checkbox" defaultChecked aria-label="Include collection" /></Slot>
          <Slot $color="#e6e6e6"><Icon name="eye" size={14} /></Slot>
          <Slot $color="#e6e6e6"><Icon name="camera" size={14} /></Slot>
        </TreeRow>
        {OBJECTS.map((name) => {
          const selected = name === 'Part_04';
          return (
            <TreeRow key={name} $depth={1} $selected={selected}>
              <Slot $color="#b4b4b4"><Icon name="right" /></Slot>
              <Slot $lit={selected} $color={selected ? '#de956b' : '#cf8748'}><Icon name="triangle" /></Slot>
              <RowName $color={selected ? '#f0ab4a' : undefined}>{name}</RowName>
              <Slot $color={selected ? '#14a9b0' : '#1fb285'}><Icon name="mesh" /></Slot>
              <Filler />
              <Slot $color="#e6e6e6"><Icon name="eye" size={14} /></Slot>
              <Slot $color="#e6e6e6"><Icon name="camera" size={14} /></Slot>
            </TreeRow>
          );
        })}
      </Tree>
    </OutlinerArea>
  );
}

function Properties() {
  return (
    <Area $grow $bg="#303030">
      <SideHeader $bg="#303030" $h={25} $base={3}>
        <Group><Chip aria-label="Editor type"><Icon name="properties" size={14} /><Icon name="down" size={14} /></Chip></Group>
        <SearchBox $w={118}><Icon name="search" /><input placeholder="Search" aria-label="Search properties" /></SearchBox>
        <Group $end><Chip $w={19} aria-label="Options"><Icon name="down" /></Chip></Group>
      </SideHeader>
      <PropsBody>
        <NavTabs>
          {NAV.map(([name, color, gap]) => (
            <NavTab key={name} $color={color} $gap={gap} $active={name === 'object'} aria-label={name}><Icon name={name} /></NavTab>
          ))}
        </NavTabs>
        <PropsContent>
          <Crumb><Icon name="object" />Part_04<Filler /><Slot $color="#8f8f8f"><Icon name="pin" /></Slot></Crumb>
          <IdField>
            <Picker><Icon name="object" /><Icon name="down" size={14} /></Picker>
            <NameInput $grow aria-label="Object name" defaultValue="Part_04" />
          </IdField>
          <Panel>
            <PanelHeader $h={26}><Icon name="expand" /><PanelTitle>Transform</PanelTitle><Grip /></PanelHeader>
            <Fields>
              <VectorFields label="Location" values={['0 m', '0 m', '0 m']} />
              <VectorFields label="Rotation" values={['90°', '0°', '0°']} />
              <FieldRow>
                <label htmlFor="mode">Mode</label>
                <SelectWrap>
                  <select id="mode" defaultValue="XYZ Euler"><option>XYZ Euler</option><option>Quaternion (WXYZ)</option></select>
                  <Icon name="down" />
                </SelectWrap>
                <span />
                <Dot />
              </FieldRow>
              <VectorFields label="Scale" values={['1.000', '1.000', '1.000']} />
            </Fields>
            <PanelHeader $h={25} $indent={19}><Icon name="right" /><PanelTitle>Delta Transform</PanelTitle></PanelHeader>
          </Panel>
          {PANELS.map((p) => (
            <Panel key={p}><PanelHeader><Icon name="right" /><PanelTitle>{p}</PanelTitle><Grip /></PanelHeader></Panel>
          ))}
        </PropsContent>
      </PropsBody>
    </Area>
  );
}

export default function App() {
  return (
    <Shell>
      <GlobalStyle />
      <TitleBar>
        <AppMark />
        <Title>* (Unsaved) - Blender 4.5.3 LTS</Title>
        <WindowButtons>
          <button aria-label="Minimize"><Icon name="minimize" /></button>
          <button aria-label="Restore"><Icon name="restore" /></button>
          <button aria-label="Close"><Icon name="quit" /></button>
        </WindowButtons>
      </TitleBar>
      <MenuBar>
        <LogoButton aria-label="Blender menu"><SiBlender size={17} /></LogoButton>
        {MENUS.map((m) => <MenuButton key={m}>{m}</MenuButton>)}
        <Workspaces>
          {WORKSPACES.map((w, i) => <WorkspaceTab key={w} $active={i === 0}>{w}</WorkspaceTab>)}
          <AddTab aria-label="Add workspace"><Icon name="plus" /></AddTab>
        </Workspaces>
        <DataBlock>
          <Picker $w={31}><Icon name="scene" /><Icon name="down" size={14} /></Picker>
          <NameInput aria-label="Scene" defaultValue="Scene" />
          <SlotButton $soft aria-label="Pin scene"><Icon name="pin" size={14} /></SlotButton>
          <SlotButton $raised aria-label="New scene"><Icon name="copy" /></SlotButton>
          <SlotButton $dim aria-label="Delete scene"><Icon name="close" /></SlotButton>
        </DataBlock>
        <DataBlock $gap={5}>
          <Picker $w={32}><Icon name="layers" /><Icon name="down" size={14} /></Picker>
          <NameInput aria-label="View layer" defaultValue="ViewLayer" />
          <SlotButton $raised aria-label="New view layer"><Icon name="copy" /></SlotButton>
          <SlotButton $dim aria-label="Remove view layer"><Icon name="close" /></SlotButton>
        </DataBlock>
      </MenuBar>
      <UsageOverlay>
        GPU<UsageValue>8<small>%</small></UsageValue>
        <UsageLine />
        CPU<UsageValue>9<small>%</small></UsageValue>
      </UsageOverlay>

      <Workspace>
        <Column>
          <ImageEditor />
          <Timeline />
        </Column>
        <Column>
          <Outliner />
          <Properties />
        </Column>
      </Workspace>
      <StatusBar>4.5.3</StatusBar>
    </Shell>
  );
}
